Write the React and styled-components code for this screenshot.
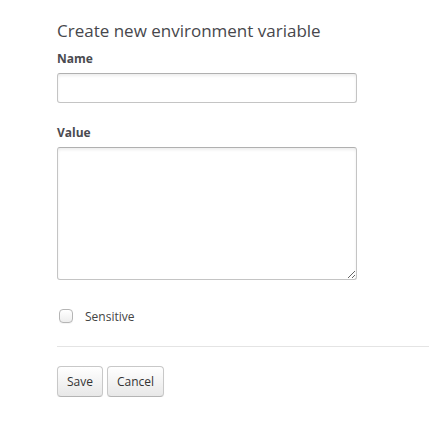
import React, {useState} from "react";
import styled, {createGlobalStyle} from "styled-components";

//page defaults
const GlobalStyle = createGlobalStyle`
    html, body {
        margin: 0;
        padding: 0;
        background: #ffffff;
    }
`;

//whole form area
const Page = styled.div`
    display: flex;
    flex-direction: column;
    padding: 20px 0 0 57px;
    font-family: "Open Sans", sans-serif;
`;

//the big heading
const Title = styled.h2`
    margin: 0 0 9px 0;
    font-size: 17px;
    line-height: 22px;
    font-weight: 400;
    color: #47474c;
`;

//field label
const Label = styled.label`
    display: block;
    font-size: 12px;
    line-height: 16px;
    font-weight: 700;
    color: #4a4a4f;
    margin: ${props => props.first ? "0" : "22px"} 0 6px 0;
`;

//single line input
const TextInput = styled.input`
    box-sizing: border-box;
    width: 300px;
    height: 30px;
    margin: 0;
    border: 1px solid #c4c4c4;
    border-top-color: #b0b0b0;
    border-radius: 3px;
    box-shadow: inset 0 2px 3px rgba(0, 0, 0, 0.07);
    background: #fff;
    &:focus{
        outline: none;
    }
`;

//multi line value input
const TextArea = styled.textarea`
    box-sizing: border-box;
    display: block;
    width: 300px;
    height: 133px;
    margin: 0;
    border: 1px solid #c4c4c4;
    border-top-color: #b0b0b0;
    border-radius: 3px;
    box-shadow: inset 0 2px 3px rgba(0, 0, 0, 0.07);
    background: #fff;
    &:focus{
        outline: none;
    }
`;

//checkbox row
const CheckRow = styled.label`
    display: flex;
    flex-direction: row;
    align-items: center;
    height: 16px;
    margin: 28px 0 0 2px;
    font-family: "Open Sans", sans-serif;
    font-size: 12px;
    font-weight: 400;
    color: #444;
`;

const Check = styled.input`
    appearance: none;
    box-sizing: border-box;
    width: 14px;
    height: 14px;
    margin: 0 12px 0 0;
    border: 1px solid #b5b5b5;
    border-radius: 4px;
    background: linear-gradient(#ffffff, #ededed);
    box-shadow: 0 1px 0 rgba(0, 0, 0, 0.04);
    &:checked{
        background: #6b8fd6;
    }
`;

//thin line above the buttons
const Divider = styled.hr`
    margin: 22px 0 19px 0;
    border: none;
    border-top: 1px solid #e4e4e4;
    height: 0;
`;

const ButtonRow = styled.div`
    display: flex;
    flex-direction: row;
    gap: 4px;
`;

//save or cancel button
const Button = styled.button`
    box-sizing: border-box;
    height: 31px;
    padding: 0 9px;
    font-family: "Open Sans", sans-serif;
    font-size: 12px;
    font-weight: 400;
    color: #333;
    border: 1px solid #c8c8c8;
    border-bottom-color: #b4b4b4;
    border-radius: 4px;
    background: linear-gradient(#ffffff, #e8e8e8);
    box-shadow: 0 1px 1px rgba(0, 0, 0, 0.05);
    cursor: pointer;
    &:focus{
        outline: none;
    }
`;

const App = () => {
    const [name, setName] = useState("");
    const [value, setValue] = useState("");
    const [sensitive, setSensitive] = useState(false);

    return (
        <>
            <GlobalStyle />
            <Page>
                <Title>Create new environment variable</Title>
                <Label first htmlFor="env-name">Name</Label>
                <TextInput id="env-name" type="text" value={name} onChange={e => setName(e.target.value)} />
                <Label htmlFor="env-value">Value</Label>
                <TextArea id="env-value" value={value} onChange={e => setValue(e.target.value)} />
                <CheckRow>
                    <Check type="checkbox" checked={sensitive} onChange={e => setSensitive(e.target.checked)} />
                    Sensitive
                </CheckRow>
                <Divider />
                <ButtonRow>
                    <Button>Save</Button>
                    <Button>Cancel</Button>
                </ButtonRow>
            </Page>
        </>
    );
};

export default App;
